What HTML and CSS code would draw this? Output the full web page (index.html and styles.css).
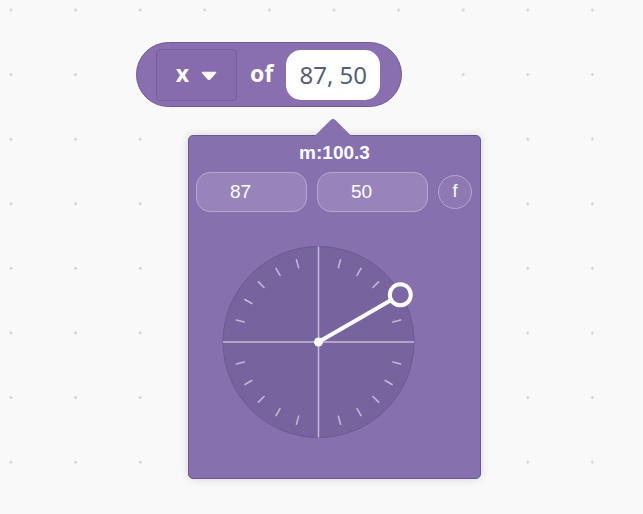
FILE: index.html
```html
<!DOCTYPE html>
<html lang="en">

<head>
    <meta charset="UTF-8">
    <meta name="viewport" content="width=device-width, initial-scale=1.0">
    <title>Vector block</title>
    <link rel="stylesheet" href="styles.css">
</head>

<body>
    <div class="workspace">
        <div class="block">
            <div class="dropdown">
                <span class="label">x</span>
                <svg class="caret" width="16" height="9" viewBox="0 0 16 9">
                    <path d="M1.5 1.5 H14.5 L9.2 7.6 Q8 8.8 6.8 7.6 Z" fill="#fff" stroke="#fff" stroke-width="1.5" stroke-linejoin="round" />
                </svg>
            </div>
            <span class="label">of</span>
            <div class="field">87, 50</div>
        </div>

        <div class="popup">
            <div class="arrow"></div>
            <div class="title">m:100.3</div>
            <div class="inputs">
                <div class="num">87</div>
                <div class="num">50</div>
                <div class="fbtn">f</div>
            </div>
            <svg class="dial" width="200" height="200" viewBox="0 0 200 200">
                <circle cx="99.5" cy="100" r="95.5" fill="#77649f" stroke="#6c5a94" stroke-width="1" />
                <g id="ticks" stroke="rgba(255,255,255,0.55)" stroke-width="1.6" stroke-linecap="round"></g>
                <line x1="99.5" y1="4.5" x2="99.5" y2="195.5" stroke="#c4b8da" stroke-width="1.5" />
                <line x1="4" y1="100" x2="195" y2="100" stroke="#c4b8da" stroke-width="1.5" />
                <line x1="99.5" y1="100" x2="172.3" y2="58" stroke="#fff" stroke-width="4" />
                <circle cx="99.5" cy="100" r="4.5" fill="#fff" />
                <circle cx="181.3" cy="52.8" r="10.5" fill="#7a67a4" stroke="#fff" stroke-width="4" />
            </svg>
        </div>
    </div>

    <script>
        // tick marks every 15 degrees, skipping the crosshair
        const ticks = document.getElementById('ticks');
        for (let deg = 0; deg < 360; deg += 15) {
            if (deg % 90 === 0) continue;
            const a = deg * Math.PI / 180;
            const line = document.createElementNS('http://www.w3.org/2000/svg', 'line');
            line.setAttribute('x1', 99.5 + 77 * Math.sin(a));
            line.setAttribute('y1', 100 - 77 * Math.cos(a));
            line.setAttribute('x2', 99.5 + 85 * Math.sin(a));
            line.setAttribute('y2', 100 - 85 * Math.cos(a));
            ticks.appendChild(line);
        }
    </script>
</body>

</html>
```

FILE: styles.css
```css
body {
    margin: 0;
    background-color: #f9f9f9;
    background-image: radial-gradient(circle at 1.5px 1.5px, #d2d2d2 1px, transparent 1.6px);
    background-size: 64.6px 64.6px;
    background-position: 9.5px 8.5px;
    min-height: 514px;
    font-family: "Noto Sans", Arial, sans-serif;
}

.workspace {
    padding: 42px 0 0 136px;
}

.block {
    display: inline-flex;
    align-items: center;
    gap: 13px;
    box-sizing: border-box;
    height: 65px;
    padding: 0 21px 0 19px;
    background-color: #8a6fb0;
    border: 1px solid #6f5a97;
    border-radius: 33px;
}

.label {
    color: #fff;
    font-size: 23px;
    font-weight: 700;
    line-height: 1;
    margin-top: -3px;
}

.dropdown {
    display: flex;
    align-items: center;
    justify-content: center;
    gap: 12px;
    box-sizing: border-box;
    width: 81px;
    height: 52px;
    border: 1px solid #765f9f;
    border-radius: 4px;
    background-color: #866cac;
}

.caret {
    margin-top: 1px;
}

.field {
    display: flex;
    align-items: center;
    justify-content: center;
    width: 94px;
    height: 50px;
    background-color: #fff;
    border-radius: 15px;
    color: #575e75;
    font-size: 24px;
}

.popup {
    position: relative;
    box-sizing: border-box;
    width: 293px;
    height: 344px;
    margin: 28px 0 0 52px;
    padding-top: 6px;
    background-color: #8670ad;
    border: 1px solid #6b5893;
    border-radius: 5px;
    box-shadow: 0 0 10px rgba(0, 0, 0, 0.15);
}

.arrow {
    position: absolute;
    top: -13px;
    left: 131px;
    width: 26px;
    height: 26px;
    background-color: #8670ad;
    border-radius: 4px 0 0 0;
    transform: rotate(45deg);
}

.title {
    position: relative;
    text-align: center;
    color: #fff;
    font-family: "Liberation Sans", Arial, sans-serif;
    font-size: 19px;
    font-weight: 700;
    line-height: 22px;
}

.inputs {
    display: flex;
    align-items: center;
    gap: 10px;
    margin-top: 8px;
    padding: 0 8px 0 7px;
}

.num {
    box-sizing: border-box;
    width: 111px;
    height: 40px;
    padding-left: 33px;
    line-height: 38px;
    color: #fff;
    font-family: "Liberation Sans", Arial, sans-serif;
    font-size: 19px;
    background-color: #9884bb;
    border: 1px solid #b5a7cf;
    border-radius: 14px;
}

.fbtn {
    box-sizing: border-box;
    width: 34px;
    height: 34px;
    border-radius: 50%;
    border: 1px solid #b5a7cf;
    background-color: #8f79b4;
    color: #fff;
    text-align: center;
    line-height: 30px;
    font-family: "Liberation Sans", Arial, sans-serif;
    font-size: 18px;
}

.dial {
    display: block;
    margin: 30px 0 0 30px;
}
```
